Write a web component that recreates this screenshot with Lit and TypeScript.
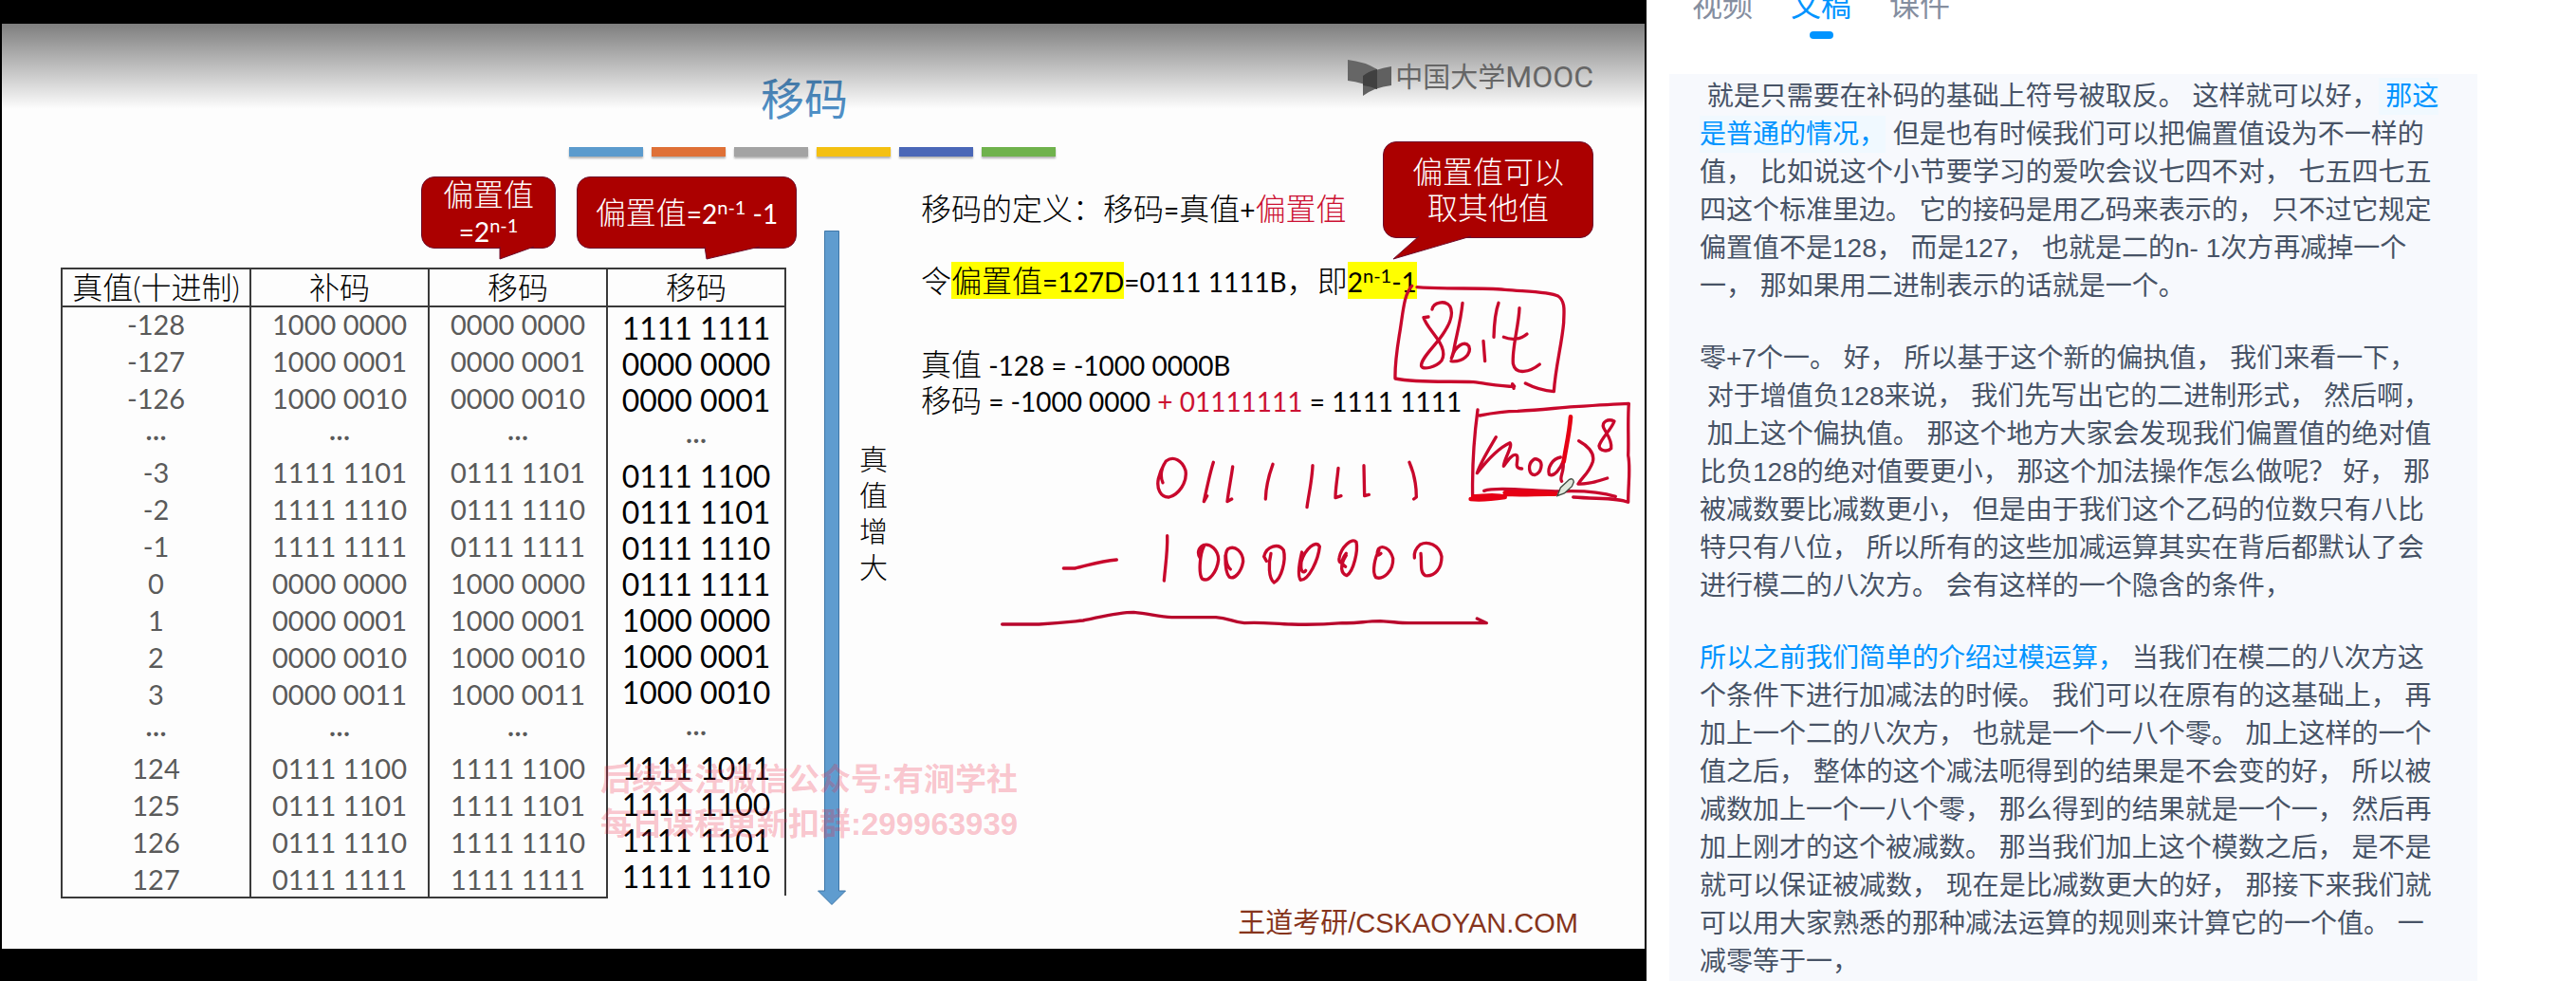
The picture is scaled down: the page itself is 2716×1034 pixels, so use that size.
import { LitElement, html, css, svg } from "lit";
import { customElement, state } from "lit/decorators.js";

const DOTS = "···";

const CODE_ROWS: string[][] = [
  ["-128", "1000 0000", "0000 0000"],
  ["-127", "1000 0001", "0000 0001"],
  ["-126", "1000 0010", "0000 0010"],
  [DOTS, DOTS, DOTS],
  ["-3", "1111 1101", "0111 1101"],
  ["-2", "1111 1110", "0111 1110"],
  ["-1", "1111 1111", "0111 1111"],
  ["0", "0000 0000", "1000 0000"],
  ["1", "0000 0001", "1000 0001"],
  ["2", "0000 0010", "1000 0010"],
  ["3", "0000 0011", "1000 0011"],
  [DOTS, DOTS, DOTS],
  ["124", "0111 1100", "1111 1100"],
  ["125", "0111 1101", "1111 1101"],
  ["126", "0111 1110", "1111 1110"],
  ["127", "0111 1111", "1111 1111"],
];

const SHIFTED_GROUPS: string[][] = [
  ["1111 1111", "0000 0000", "0000 0001"],
  ["0111 1100", "0111 1101", "0111 1110", "0111 1111", "1000 0000", "1000 0001", "1000 0010"],
  ["1111 1011", "1111 1100", "1111 1101", "1111 1110"],
];

const SHIFTED_ROWS = SHIFTED_GROUPS.flatMap((g, i) => (i ? [DOTS, ...g] : g));

const BAR_COLORS = ["#5b9bcd", "#df7036", "#a3a3a3", "#f4c011", "#4a67b7", "#6fb24c"];

interface Part {
  text: string;
  tone?: "active" | "played";
}

const TRANSCRIPT: Part[][] = [
  [
    { text: " 就是只需要在补码的基础上符号被取反。 这样就可以好，" },
    { text: " 那这\n是普通的情况，", tone: "active" },
    {
      text:
        " 但是也有时候我们可以把偏置值设为不一样的\n值， 比如说这个小节要学习的爱吹会议七四不对， 七五四七五\n四这个标准里边。 它的接码是用乙码来表示的， 只不过它规定\n偏置值不是128， 而是127， 也就是二的n- 1次方再减掉一个\n一， 那如果用二进制表示的话就是一个。",
    },
  ],
  [
    {
      text:
        "零+7个一。 好， 所以基于这个新的偏执值， 我们来看一下，\n 对于增值负128来说， 我们先写出它的二进制形式， 然后啊，\n 加上这个偏执值。 那这个地方大家会发现我们偏置值的绝对值\n比负128的绝对值要更小， 那这个加法操作怎么做呢？ 好， 那\n被减数要比减数更小， 但是由于我们这个乙码的位数只有八比\n特只有八位， 所以所有的这些加减运算其实在背后都默认了会\n进行模二的八次方。 会有这样的一个隐含的条件，",
    },
  ],
  [
    { text: "所以之前我们简单的介绍过模运算，", tone: "played" },
    {
      text:
        " 当我们在模二的八次方这\n个条件下进行加减法的时候。 我们可以在原有的这基础上， 再\n加上一个二的八次方， 也就是一个一八个零。 加上这样的一个\n值之后， 整体的这个减法呃得到的结果是不会变的好， 所以被\n减数加上一个一八个零， 那么得到的结果就是一个一， 然后再\n加上刚才的这个被减数。 那当我们加上这个模数之后， 是不是\n就可以保证被减数， 现在是比减数更大的好， 那接下来我们就\n可以用大家熟悉的那种减法运算的规则来计算它的一个值。 一\n减零等于一，",
    },
  ],
];

@customElement("lecture-slide")
export class LectureSlide extends LitElement {
  static styles = css`
    :host {
      display: flex;
      position: relative;
      overflow: hidden;
      box-sizing: border-box;
      background: #000;
      padding: 25px 2px 34px;
      font-family: Lato, "Noto Sans CJK SC", sans-serif;
      font-size: 32px;
      line-height: 38px;
      font-weight: 300;
      color: #000;
    }
    .slide {
      flex: 1;
      min-width: 0;
      display: flex;
      flex-direction: column;
      background: #fdfdfd;
    }
    .num {
      font-size: 28px;
      line-height: 0;
      font-weight: 400;
    }
    sup {
      font-size: 20px;
      line-height: 0;
      vertical-align: 10px;
    }
    .head {
      display: flex;
      flex-direction: column;
      align-items: center;
      gap: 18px;
      padding: 46px 24px 0 0;
    }
    .title {
      margin: 0 16px 0 0;
      font-size: 46px;
      line-height: 66px;
      font-weight: 400;
      color: #4f8fc6;
    }
    .bars {
      display: flex;
      gap: 9px;
    }
    .bars svg {
      display: block;
      width: 78px;
      height: 10px;
      box-shadow: 0 2px 2px rgba(0, 0, 0, 0.3);
    }
    .body {
      flex: 1;
      display: flex;
      padding-left: 62px;
    }
    .callouts {
      display: flex;
      justify-content: flex-end;
      gap: 22px;
      padding: 21px 0 20px;
    }
    .callout {
      position: relative;
      box-sizing: border-box;
      display: flex;
      flex-direction: column;
      justify-content: center;
      align-items: center;
      height: 76px;
      border: 1px solid #6d0d2c;
      border-radius: 14px;
      background: #ab0000;
      color: #fff;
      white-space: nowrap;
    }
    .callout svg {
      position: absolute;
      top: 100%;
      overflow: visible;
    }
    .callout path {
      fill: #ab0000;
      stroke: #6d0d2c;
    }
    .narrow {
      width: 142px;
    }
    .wide {
      width: 232px;
    }
    .narrow svg {
      left: 82px;
    }
    .wide svg {
      left: 134px;
    }
    .remark {
      position: absolute;
      right: 56px;
      top: 149px;
      width: 222px;
      height: 102px;
    }
    .remark svg {
      left: 10px;
    }
    .data {
      width: 776px;
    }
    .tables {
      display: flex;
      align-items: flex-start;
    }
    table {
      border-collapse: collapse;
      table-layout: fixed;
    }
    .codes {
      width: 577px;
      border: 2px solid #3a3a3a;
    }
    .shifted {
      width: 190px;
      margin-left: -2px;
      border: 2px solid #3a3a3a;
      border-bottom: none;
    }
    .first {
      width: 197px;
    }
    th {
      height: 38px;
      padding: 0;
      font-weight: 300;
      line-height: 38px;
      border: 2px solid #3a3a3a;
      white-space: nowrap;
    }
    td {
      padding: 0 0 3px;
      text-align: center;
      border-left: 2px solid #3a3a3a;
      white-space: nowrap;
    }
    .codes td {
      height: 36px;
      line-height: 36px;
      font-size: 29px;
      font-weight: 400;
      color: #5a5a5a;
    }
    .codes tbody tr:last-child td {
      padding-bottom: 0;
    }
    .shifted td {
      height: 35px;
      line-height: 35px;
      font-weight: 400;
      color: #000;
    }
    .shifted tr:first-child td {
      padding-top: 4px;
    }
    .shifted .gap td {
      height: 39px;
      line-height: 39px;
      font-size: 29px;
      color: #5a5a5a;
    }
    .trend {
      display: flex;
      gap: 13px;
      padding: 78px 0 0 22px;
      font-size: 30px;
      line-height: 38px;
    }
    .arrow {
      display: block;
      width: 30px;
      height: 711px;
    }
    .vertical {
      width: 32px;
      padding-top: 221px;
      text-align: center;
    }
    .notes {
      flex: 1;
      display: flex;
      flex-direction: column;
      gap: 38px;
      padding: 36px 70px 8px 34px;
      white-space: nowrap;
    }
    .notes p {
      margin: 0;
    }
    .worked {
      padding-top: 12px;
    }
    .red {
      color: #cc1133;
    }
    mark {
      background: #ffff00;
      color: inherit;
    }
    .notes .footer {
      margin-top: auto;
      text-align: right;
      font-family: "Liberation Sans", "Noto Sans CJK SC", sans-serif;
      font-size: 29px;
      font-weight: 400;
      color: #86341c;
    }
    .watermark {
      position: absolute;
      left: 633px;
      top: 798px;
      font-family: "Liberation Sans", "Noto Sans CJK SC", sans-serif;
      font-size: 33px;
      line-height: 47px;
      font-weight: 700;
      color: rgba(240, 40, 70, 0.27);
      white-space: nowrap;
    }
    .shade {
      position: absolute;
      left: 2px;
      right: 2px;
      top: 25px;
      height: 90px;
      background: linear-gradient(rgba(0, 0, 0, 0.5), rgba(0, 0, 0, 0));
    }
    .logo {
      position: absolute;
      right: 56px;
      top: 62px;
      display: flex;
      align-items: center;
      gap: 4px;
      font-family: Roboto, "Noto Sans CJK SC", sans-serif;
      font-size: 29px;
      line-height: 40px;
      font-weight: 400;
      color: #666;
    }
    .logo svg {
      width: 46px;
      height: 40px;
    }
    .latin {
      font-size: 32px;
      line-height: 0;
    }
    .ink {
      position: absolute;
      left: 0;
      top: 0;
      width: 1736px;
      height: 1034px;
      pointer-events: none;
    }
    .stroke {
      fill: none;
      stroke: #c8082c;
      stroke-width: 10;
      stroke-linecap: round;
      stroke-linejoin: round;
    }
    .heavy {
      stroke: #e60014;
      stroke-width: 14;
    }
    .line {
      stroke: #b8062c;
    }
  `;

  private renderInk() {
    return svg`
      <g class="stroke" transform="translate(1420 290) scale(0.333333)">
        <path d="M222 38 C320 46 420 38 500 46 C570 52 640 52 668 66 C694 84 686 120 686 150 C680 220 660 290 655 368 C630 366 600 360 565 342" />
        <path d="M206 34 C180 60 178 120 166 190 C158 240 152 290 153 327 C230 342 330 334 400 338 C450 344 490 352 530 352 L524 344 L528 358" />
        <path d="M270 108 C274 86 310 78 326 98 C342 126 318 170 290 206 C262 240 232 270 236 288 C242 300 282 292 300 270 C314 246 300 220 284 198 C268 174 250 156 243 134 L258 132" />
        <path d="M366 88 C360 150 344 200 338 240 C332 262 328 270 334 256 C342 226 372 206 386 224 C396 250 366 276 330 272" />
        <path d="M432 208 L437 272 M480 88 C468 120 466 160 465 196" />
        <path d="M546 104 C544 160 522 230 526 280 C534 318 580 306 610 282 M496 196 C520 206 550 204 570 186" />
        <path d="M414 426 C404 500 396 600 398 705 M420 444 C460 436 500 430 540 430 C620 426 660 420 720 416 C780 412 840 408 892 406 C888 460 892 520 890 570 C898 610 890 660 890 718 C860 704 800 708 716 702" />
        <path d="M472 512 C450 550 424 590 412 626 C440 590 480 546 516 530 C526 540 498 580 496 604 C506 590 526 560 538 570 C546 584 524 612 554 612" />
        <path d="M590 584 C570 600 576 630 594 632 C616 626 622 592 606 584 C598 580 592 582 590 584" />
        <path d="M676 576 C650 580 634 610 640 630 C656 640 676 610 684 590 C690 620 670 640 680 652" />
        <path class="heavy" d="M708 448 C704 500 694 540 686 590" />
        <path d="M734 524 C756 536 786 560 778 590 C766 626 744 640 732 660 C760 662 800 650 824 642" />
        <path d="M846 462 C826 452 806 464 812 482 C820 500 840 520 836 548 C826 560 800 556 798 540 C804 516 836 490 846 462" />
        <path d="M434 682 C470 670 560 680 660 684 C740 680 800 684 850 700" />
        <path class="heavy" d="M392 708 C430 712 460 708 500 702 C470 692 430 700 400 700 M504 692 C560 696 610 690 660 692 C600 684 540 684 500 688" />
      </g>
      <g transform="translate(1420 290) scale(0.333333)">
        <path d="M666 698 L676 672 L704 646 Q716 640 718 654 L712 668 L688 690 Z" fill="#dfe8dc" stroke="#3f4a40" stroke-width="4" />
      </g>
      <g class="stroke" transform="translate(1052 470) scale(0.333333)">
        <path d="M522 116 C512 96 518 66 532 48 C556 30 584 46 594 78 C600 116 572 154 542 162 C514 164 502 134 508 104 C512 86 518 72 526 58" />
        <path d="M682 52 C670 90 662 130 652 176 L662 158 M743 66 C738 104 730 140 726 176 L740 168" />
        <path d="M870 58 C856 96 848 130 847 168 M996 62 C994 110 984 150 978 194" />
        <path d="M1077 70 C1074 104 1068 134 1068 164 L1086 158 M1158 62 L1160 158 L1174 154 M1302 52 C1316 84 1324 124 1324 162 L1316 168" />
        <path d="M208 387 L244 387 C280 380 320 364 376 360 M536 284 C538 330 530 380 526 426" />
        <path d="M652 318 C640 340 634 400 646 420 C668 434 694 396 698 360 C698 330 672 306 650 314 C634 322 630 340 640 354 L648 324" />
        <path d="M736 390 C722 380 716 340 728 326 C750 312 776 336 776 366 C770 400 748 424 732 414 C718 398 720 362 720 346" />
        <path d="M864 340 C856 370 856 420 874 432 C898 420 912 360 904 330 C888 306 850 316 842 350 L850 364" />
        <path d="M962 336 C954 370 946 410 958 424 C984 424 1014 360 1018 318 C1006 296 972 326 960 366 C956 400 968 404 974 394" />
        <path d="M1102 340 C1088 358 1084 374 1100 382 M1102 346 C1080 380 1086 404 1104 410 C1126 396 1140 330 1134 304 C1120 288 1086 320 1080 354 C1078 364 1082 368 1086 370" />
        <path d="M1206 330 C1194 350 1182 398 1196 416 C1220 424 1252 396 1250 356 C1242 324 1216 312 1204 326 C1196 344 1202 350 1212 340" />
        <path d="M1338 340 C1342 370 1334 400 1352 410 C1384 414 1404 386 1404 350 C1396 312 1360 300 1336 312 C1322 324 1316 340 1318 354" />
        <path class="line" d="M14 564 L130 564 C200 560 230 556 270 552 C330 540 380 526 430 526 C480 530 510 542 550 542 L690 542 C730 544 740 556 780 560 C840 556 880 564 930 564 C990 566 1040 564 1090 560 C1140 562 1160 554 1210 554 C1250 556 1270 560 1300 560 L1546 560 L1516 546" />
      </g>
    `;
  }

  render() {
    return html`
      <section class="slide">
        <header class="head">
          <h1 class="title">移码</h1>
          <div class="bars">
            ${BAR_COLORS.map(
              (c) => html`<svg viewBox="0 0 78 10" aria-hidden="true"><rect width="78" height="10" fill=${c} /></svg>`
            )}
          </div>
        </header>
        <div class="body">
          <div class="data">
            <div class="callouts">
              <div class="callout narrow">
                <span>偏置值</span>
                <span><span class="num">=2<sup>n-1</sup></span></span>
                <svg width="38" height="12" aria-hidden="true"><path d="M0 -1 L0 12 L36 -1" /></svg>
              </div>
              <div class="callout wide">
                <span>偏置值<span class="num">=2<sup>n-1</sup> -1</span></span>
                <svg width="60" height="12" aria-hidden="true"><path d="M0 -1 L2 12 L58 -1" /></svg>
              </div>
            </div>
            <div class="tables">
              <table class="codes">
                <thead>
                  <tr>
                    <th class="first">真值(十进制)</th>
                    <th>补码</th>
                    <th>移码</th>
                  </tr>
                </thead>
                <tbody>
                  ${CODE_ROWS.map((r) => html`<tr>${r.map((c) => html`<td>${c}</td>`)}</tr>`)}
                </tbody>
              </table>
              <table class="shifted">
                <thead>
                  <tr><th>移码</th></tr>
                </thead>
                <tbody>
                  ${SHIFTED_ROWS.map((c) => html`<tr class=${c === DOTS ? "gap" : "row"}><td>${c}</td></tr>`)}
                </tbody>
              </table>
            </div>
          </div>
          <div class="trend">
            <svg class="arrow" viewBox="0 0 30 711" aria-hidden="true">
              <path d="M7.5 0.5 H22.5 V696 H29.5 L15 710.5 L0.5 696 H7.5 Z" fill="#5f9ccf" stroke="#3f77a8" />
            </svg>
            <div class="vertical">真<br />值<br />增<br />大</div>
          </div>
          <div class="notes">
            <p>移码的定义：移码<span class="num">=</span>真值<span class="num">+</span><span class="red">偏置值</span></p>
            <p>令<mark>偏置值<span class="num">=127D</span></mark><span class="num">=0111 1111B</span>，即<mark><span class="num">2<sup>n-1</sup>-1</span></mark></p>
            <p class="worked">
              真值<span class="num"> -128 = -1000 0000B</span><br />
              移码<span class="num"> = -1000 0000 <span class="red">+ 01111111</span> = 1111 1111</span>
            </p>
            <p class="footer">王道考研/CSKAOYAN.COM</p>
          </div>
        </div>
      </section>
      <div class="callout remark">
        <span>偏置值可以</span>
        <span>取其他值</span>
        <svg width="84" height="23" aria-hidden="true"><path d="M27 -1 L0 23 L82 -1" /></svg>
      </div>
      <div class="watermark">后续关注微信公众号:有涧学社<br />每日课程更新扣群:299963939</div>
      <svg class="ink" viewBox="0 0 1736 1034" aria-hidden="true">${this.renderInk()}</svg>
      <div class="shade"></div>
      <div class="logo">
        <svg viewBox="0 0 46 40" aria-hidden="true">
          <path d="M0 1 Q18 3 31 11 V32 Q16 25 0 23 Z" fill="#666" />
          <path d="M16 39 V18 Q28 11 46 8 V28 Q28 30 16 39 Z" fill="#606060" />
          <path d="M16 18 Q22 13 31 11 V32 Q24 29 16 28 Z" fill="#404040" />
        </svg>
        <span>中国大学<span class="latin">MOOC</span></span>
      </div>
    `;
  }
}

@customElement("transcript-panel")
export class TranscriptPanel extends LitElement {
  static styles = css`
    :host {
      display: block;
      background: #fff;
      overflow: hidden;
      font-family: "Liberation Sans", "Noto Sans CJK SC", sans-serif;
    }
    .tabs {
      display: flex;
      gap: 40px;
      padding-left: 48px;
      height: 78px;
    }
    .tab {
      display: flex;
      flex-direction: column;
      align-items: center;
      gap: 21px;
      height: 41px;
      padding: 0;
      border: none;
      background: none;
      font: inherit;
      font-size: 32px;
      line-height: 12px;
      color: #858e9f;
    }
    .on {
      color: #0094ff;
    }
    .on::after {
      content: "";
      width: 25px;
      height: 8px;
      border-radius: 4px;
      background: #0094ff;
    }
    .text {
      margin: 0 104px 0 24px;
      padding: 4px 24px 36px 32px;
      min-height: 100vh;
      background: #f7f9fd;
      font-size: 28px;
      line-height: 40px;
      color: #475366;
    }
    .text p {
      margin: 0 0 36px;
      white-space: pre-wrap;
    }
    .active {
      padding: 4px 0;
      background: #f0f9ff;
      color: #0094ff;
    }
    .played {
      color: #0094ff;
    }
  `;

  @state() private current = "文稿";

  render() {
    return html`
      <nav class="tabs">
        ${["视频", "文稿", "课件"].map(
          (t) =>
            html`<button class="tab ${t === this.current ? "on" : ""}" @click=${() => (this.current = t)}>${t}</button>`
        )}
      </nav>
      <article class="text">
        ${TRANSCRIPT.map((p) => html`<p>${p.map((s) => html`<span class=${s.tone ?? "plain"}>${s.text}</span>`)}</p>`)}
      </article>
    `;
  }
}

@customElement("app-root")
export class AppRoot extends LitElement {
  static styles = css`
    :host {
      display: grid;
      grid-template-columns: minmax(0, 1736fr) minmax(0, 980fr);
      height: 100vh;
      overflow: hidden;
    }
  `;

  render() {
    return html`<lecture-slide></lecture-slide><transcript-panel></transcript-panel>`;
  }
}
